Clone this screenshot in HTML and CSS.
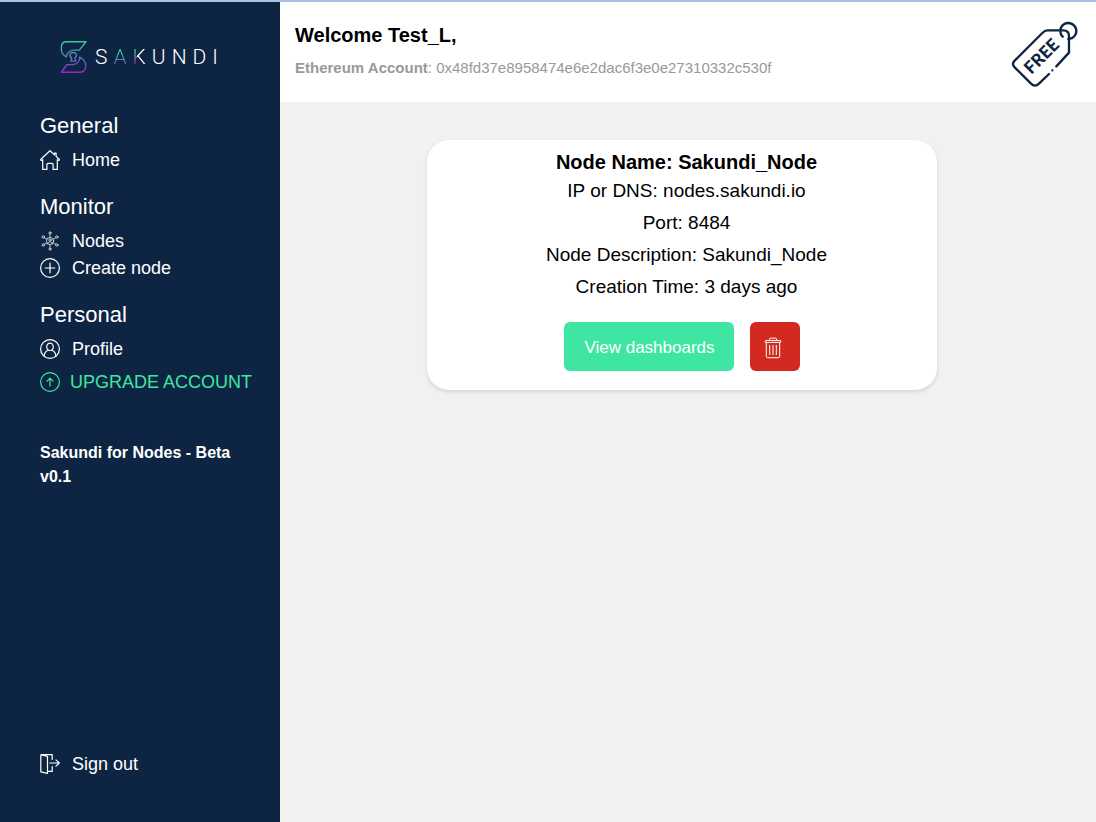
FILE: index.html
```html
<!DOCTYPE html>
<html lang="en">
<head>
<meta charset="utf-8">
<meta name="viewport" content="width=device-width, initial-scale=1">
<title>Sakundi</title>
<link rel="stylesheet" href="styles.css">
</head>
<body>
<div class="app">
  <aside class="sidebar">
    <a class="brand" href="#">
      <svg class="brand-mark" viewBox="32 32 78 98" fill="none" stroke="url(#mark)" stroke-width="4" stroke-linejoin="round" stroke-linecap="round" aria-hidden="true">
        <defs><linearGradient id="mark" gradientUnits="userSpaceOnUse" x1="70" y1="36" x2="70" y2="128"><stop offset="0" stop-color="#35cf98"/><stop offset=".5" stop-color="#5d72bd"/><stop offset="1" stop-color="#a51fc0"/></linearGradient></defs>
        <path d="M107 37H51C41 37 36 43 36 52V60C36 70 43 76 50 81C52 69 60 62 72 61H88Z"/>
        <path d="M36 125H90C100 125 106 118 106 108V103C106 93 98 87 89 81C90 94 81 102 69 103H52Z"/>
        <path d="M66 84C56 77 61 68 70 68C79 68 84 77 75 84L78 93H63Z"/>
      </svg>
      <span class="brand-name">S<span class="tint">A</span><span class="tint-edge">K</span>UNDI</span>
    </a>
    <nav class="menu" aria-label="Main">
      <section class="group">
        <h2>General</h2>
        <a class="item" href="#"><svg class="icon" viewBox="0 0 20 20" aria-hidden="true"><path d="M10 .7.8 9.3q-.3 1.3 1.1 1l.8-.6v9.7h4.2v-4.8q0-1.2 1.2-1.2h3.8q1.2 0 1.2 1.2v4.8h4.2V9.7l.8.6q1.4.3 1.1-1l-3.1-2.9V3.2h-1.6v1.7z"/></svg>Home</a>
      </section>
      <section class="group">
        <h2>Monitor</h2>
        <a class="item" href="#"><svg class="icon thin" viewBox="0 0 20 20" aria-hidden="true"><circle cx="10" cy="10" r="3.6"/><circle cx="10" cy="9" r="1.2"/><path d="M7.7 13c.2-3 4.4-3 4.6 0M10 3v3.2M10 13.8V17M4.4 6.8l2.5 1.4M15.6 6.8l-2.5 1.4M4.4 13.2l2.5-1.4M15.6 13.2l-2.5-1.4"/><circle cx="10" cy="1.9" r="1.1"/><circle cx="10" cy="18.1" r="1.1"/><circle cx="3.2" cy="6" r="1.2"/><circle cx="16.8" cy="6" r="1.2"/><circle cx="3.2" cy="14" r="1.2"/><circle cx="16.8" cy="14" r="1.2"/></svg>Nodes</a>
        <a class="item" href="#"><svg class="icon" viewBox="0 0 20 20" aria-hidden="true"><circle cx="10" cy="10" r="9.4"/><path d="M10 5.2v9.6M5.2 10h9.6"/></svg>Create node</a>
      </section>
      <section class="group">
        <h2>Personal</h2>
        <a class="item" href="#"><svg class="icon" viewBox="0 0 20 20" aria-hidden="true"><circle cx="10" cy="10" r="9.4"/><ellipse cx="10" cy="7.8" rx="3.3" ry="3.7"/><path d="M4.2 17.2c.1-3.3 1.5-5.2 4-6M15.8 17.2c-.1-3.3-1.5-5.2-4-6"/></svg>Profile</a>
        <a class="item upgrade" href="#"><svg class="icon" viewBox="0 0 20 20" aria-hidden="true"><circle cx="10" cy="10" r="9.4"/><path d="M10 14V6.3M7 9.2l3-3 3 3"/></svg>UPGRADE ACCOUNT</a>
      </section>
    </nav>
    <p class="version">Sakundi for Nodes - Beta v0.1</p>
    <a class="item sign-out" href="#"><svg class="icon" viewBox="0 0 20 20" aria-hidden="true"><path d="M1.2.9 7.5 2.4v17L.8 17.8V1.4Q.8.9 1.2.9zM1.2.7h11v4.8M12.2 12.5v4.9H7.5M9.8 9h9.4M16 5.9 19.3 9 16 12.1"/></svg>Sign out</a>
  </aside>
  <div class="page">
    <header class="header">
      <div class="greeting">
        <h1>Welcome Test_L,</h1>
        <p><strong>Ethereum Account</strong>: 0x48fd37e8958474e6e2dac6f3e0e27310332c530f</p>
      </div>
      <svg class="plan" viewBox="30 30 204 204" fill="none" stroke="#0d2543" stroke-width="7" stroke-linecap="round" stroke-linejoin="round" role="img" aria-label="Free plan">
        <path d="M147 192 117 221Q105 233 93 221L44 172Q34 162 44 152L127 69Q135 61 142 61H190Q207 61 207 78V128L169 169M157 181h.1"/>
        <path d="M188 80A24 24 0 1 1 205 87"/>
        <text class="plan-text" transform="translate(94 195) rotate(-45)">FREE</text>
      </svg>
    </header>
    <main class="content">
      <article class="card">
        <div class="details">
          <h2>Node Name: Sakundi_Node</h2>
          <p>IP or DNS: nodes.sakundi.io</p>
          <p>Port: 8484</p>
          <p>Node Description: Sakundi_Node</p>
          <p>Creation Time: 3 days ago</p>
        </div>
        <div class="actions">
          <button class="view" type="button">View dashboards</button>
          <button class="delete" type="button" aria-label="Delete node"><svg class="trash" viewBox="0 0 18 22" aria-hidden="true"><path d="M5.5 3.4V2.2q0-1 1-1h5q1 0 1 1v1.2M1.9 3.5h14.2q.7 0 .7.7v1.2H1.2V4.2q0-.7.7-.7zM2.3 5.5v13.7q0 1.5 1.5 1.5h10.4q1.5 0 1.5-1.5V5.5M5.7 8v10M9 8v10M12.3 8v10"/></svg></button>
        </div>
      </article>
    </main>
  </div>
</div>
</body>
</html>
```
FILE: styles.css
```css
* { box-sizing: border-box; }
body {
  margin: 0;
  font-family: "Liberation Sans", Arial, sans-serif;
  color: #000;
}
h1, h2, p { margin: 0; }
a { color: inherit; text-decoration: none; }
button { border: 0; padding: 0; font: inherit; cursor: pointer; }

.app {
  display: flex;
  min-height: 100vh;
  border-top: 2px solid #a9c1e8;
  background: #f1f1f1;
}
.sidebar {
  flex: 0 0 280px;
  display: flex;
  flex-direction: column;
  padding: 38px 20px 44px 40px;
  background: #0d2543;
  color: #fff;
}
.brand {
  display: flex;
  align-items: center;
  gap: 8px;
  height: 34px;
  margin: 0 0 35px 20px;
}
.brand-mark { width: 27px; height: 34px; }
.brand-name {
  font: 300 21px/32px Roboto, sans-serif;
  letter-spacing: 6px;
  white-space: nowrap;
}
.tint, .tint-edge {
  background: linear-gradient(#35cf98 30%, #6b62c0 75%);
  -webkit-background-clip: text;
  background-clip: text;
  color: transparent;
}
.tint-edge {
  background: linear-gradient(90deg, transparent 4px, #fff 4px), linear-gradient(#35cf98 30%, #a51fc0 75%);
  -webkit-background-clip: text;
  background-clip: text;
}
.menu { display: flex; flex-direction: column; gap: 16px; }
.group h2 {
  margin-bottom: 5px;
  font-size: 22px;
  font-weight: 400;
  line-height: 33px;
}
.item {
  display: flex;
  align-items: center;
  gap: 12px;
  font-size: 18px;
  line-height: 27px;
}
.icon {
  flex: none;
  width: 20px;
  height: 20px;
  margin-bottom: 1px;
  fill: none;
  stroke: currentColor;
  stroke-width: 1.2;
  stroke-linejoin: round;
  stroke-linecap: round;
}
.thin { stroke-width: .7; }
.upgrade { gap: 10px; margin-top: 6px; color: #3fe6a2; white-space: nowrap; }
.version {
  margin-top: 45px;
  font-size: 16px;
  font-weight: 700;
  line-height: 24px;
}
.sign-out { margin-top: auto; }

.page { flex: 1; min-width: 0; }
.header {
  display: flex;
  justify-content: space-between;
  align-items: flex-start;
  padding: 18px 18px 14px 15px;
  background: #fff;
}
.greeting h1 { font-size: 20px; line-height: 30px; }
.greeting p {
  margin-top: 6px;
  color: #999;
  font-size: 15px;
  line-height: 23px;
}
.plan { flex: none; width: 68px; height: 68px; }
.plan-text {
  font: 900 52px Lato, sans-serif;
  fill: #0d2543;
  stroke: none;
}
.content { padding: 38px 12px 38px 0; }
.card {
  max-width: 510px;
  margin: 0 auto;
  padding: 9px 0 19px;
  border-radius: 22px;
  background: #fff;
  box-shadow: 0 2px 4px rgba(0, 0, 0, .12);
}
.details { padding-left: 9px; text-align: center; }
.details h2 { font-size: 20px; line-height: 26px; }
.details p { font-size: 19px; line-height: 32px; }
.actions {
  display: flex;
  justify-content: center;
  gap: 16px;
  margin-top: 19px;
}
.view, .delete {
  height: 49px;
  border-radius: 6px;
  color: #fff;
  font-size: 17px;
}
.view { padding: 2px 19px 0 20px; background: #3fe6a2; }
.delete {
  display: grid;
  place-items: center;
  width: 50px;
  padding: 2px 4px 0 0;
  background: #d22920;
}
.trash {
  width: 18px;
  height: 22px;
  fill: none;
  stroke: currentColor;
  stroke-width: 1;
  stroke-linejoin: round;
}
```
